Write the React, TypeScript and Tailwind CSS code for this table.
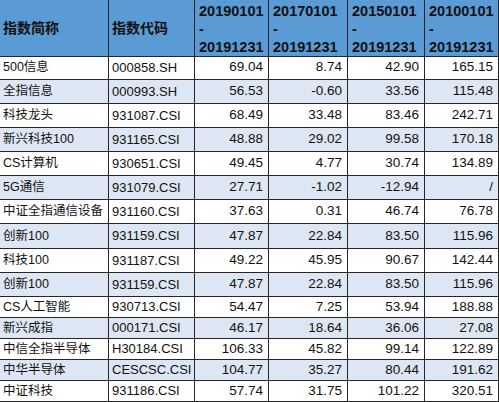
const FONT = "font-['Liberation_Sans','Noto_Sans_CJK_SC',sans-serif]";

interface Row {
  name: string;
  code: string;
  values: string[];
}

const ROWS: Row[] = [
  { name: "500信息", code: "000858.SH", values: ["69.04", "8.74", "42.90", "165.15"] },
  { name: "全指信息", code: "000993.SH", values: ["56.53", "-0.60", "33.56", "115.48"] },
  { name: "科技龙头", code: "931087.CSI", values: ["68.49", "33.48", "83.46", "242.71"] },
  { name: "新兴科技100", code: "931165.CSI", values: ["48.88", "29.02", "99.58", "170.18"] },
  { name: "CS计算机", code: "930651.CSI", values: ["49.45", "4.77", "30.74", "134.89"] },
  { name: "5G通信", code: "931079.CSI", values: ["27.71", "-1.02", "-12.94", "/"] },
  { name: "中证全指通信设备", code: "931160.CSI", values: ["37.63", "0.31", "46.74", "76.78"] },
  { name: "创新100", code: "931159.CSI", values: ["47.87", "22.84", "83.50", "115.96"] },
  { name: "科技100", code: "931187.CSI", values: ["49.22", "45.95", "90.67", "142.44"] },
  { name: "创新100", code: "931159.CSI", values: ["47.87", "22.84", "83.50", "115.96"] },
  { name: "CS人工智能", code: "930713.CSI", values: ["54.47", "7.25", "53.94", "188.88"] },
  { name: "新兴成指", code: "000171.CSI", values: ["46.17", "18.64", "36.06", "27.08"] },
  { name: "中信全指半导体", code: "H30184.CSI", values: ["106.33", "45.82", "99.14", "122.89"] },
  { name: "中华半导体", code: "CESCSC.CSI", values: ["104.77", "35.27", "80.44", "191.62"] },
  { name: "中证科技", code: "931186.CSI", values: ["57.74", "31.75", "101.22", "320.51"] },
];

// first ten rows are a little taller than the last five in the source
const ROW_HEIGHTS = [
  "h-[24px]", "h-[24px]", "h-[24px]", "h-[24px]", "h-[24px]",
  "h-[24px]", "h-[24px]", "h-[25px]", "h-[24px]", "h-[24px]",
  "h-[21px]", "h-[21px]", "h-[21px]", "h-[21px]", "h-[21px]",
];

const PERIODS = ["20190101", "20170101", "20150101", "20100101"];

const GRID = "grid grid-cols-[109px_86px_74px_79px_77px_74px]";
const CELL = "border-r border-b border-[#262626] flex items-center";

export default function App() {
  return (
    <div className={`w-[499px] h-[402px] overflow-hidden bg-white text-[#111] ${FONT}`}>
      <div className={`${GRID} h-[56px] bg-[#5b9bd5] font-bold`}>
        <div className={`${CELL} pl-[3px] text-[14px]`}>指数简称</div>
        <div className={`${CELL} pl-[3px] text-[14px]`}>指数代码</div>
        {PERIODS.map((p) => (
          <div
            key={p}
            className="border-r border-b border-[#262626] pl-[4px] pt-[2px] text-[14.5px] leading-[18px]"
          >
            <div>{p}</div>
            <div>-</div>
            <div>20191231</div>
          </div>
        ))}
      </div>

      {ROWS.map((row, i) => (
        <div
          key={i}
          className={`${GRID} ${ROW_HEIGHTS[i]} ${i % 2 === 1 ? "bg-[#dce7f3]" : "bg-white"}`}
        >
          <div className={`${CELL} pl-[3px] text-[12.5px] whitespace-nowrap`}>{row.name}</div>
          <div className={`${CELL} pl-[3px] text-[13px]`}>{row.code}</div>
          {row.values.map((v, j) => (
            <div key={j} className={`${CELL} justify-end pr-[5px] text-[13.5px]`}>
              {v}
            </div>
          ))}
        </div>
      ))}
    </div>
  );
}
